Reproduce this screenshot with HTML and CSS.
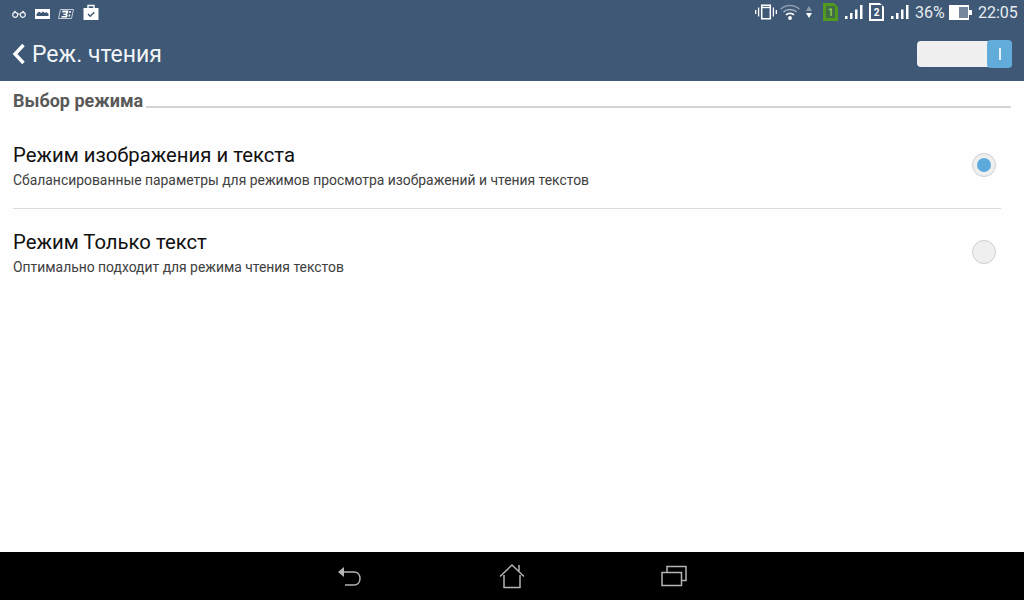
FILE: index.html
```html
<!DOCTYPE html>
<html lang="ru">

<head>
    <meta charset="UTF-8">
    <title>Реж. чтения</title>
    <link rel="stylesheet" href="styles.css">
</head>

<body>
    <div class="screen">
        <header class="topbar">
            <div class="statusbar">
                <div class="status-left">
                    <!-- glasses -->
                    <svg class="icon glasses" width="14" height="8" viewBox="0 0 14 8" fill="none" stroke="#f2f4f6" stroke-width="1.200"><circle cx="3.200" cy="4.800" r="2.500"/><circle cx="10.800" cy="4.800" r="2.500"/><path d="M5.500 4h3M2 2.500L3.500.8M12 2.500L10.500.8"/></svg>
                    <!-- gallery -->
                    <svg class="icon gallery" width="15" height="10" viewBox="0 0 15 10"><path fill="#fff" d="M0 0h15v10H0z"/><path fill="#3e5875" d="M1.500 7V5l2.500-2.500 2 1.500 2-1.500 2 1.500 1.500-1 2 2v2z"/></svg>
                    <!-- calendar -->
                    <svg class="icon calendar" width="16" height="10" viewBox="0 0 16 10"><path fill="none" stroke="#c4ccd6" d="M2.500.5h13l-2 9H.5z"/><path fill="#fff" d="M4.500 1.500h6L10 4 9 5l.7 1-.6 2.500H3.300l.4-1.500h3.800l.3-1H5.200l.3-1.200h2.400l.2-1.300H4.200zM11.500 2H13l-.4 2h-1.500zM10.900 5.500h1.500L12 7.500h-1.500z"/></svg>
                    <!-- task bag -->
                    <svg class="icon bag" width="16" height="16" viewBox="0 0 16 16"><path fill="none" stroke="#fff" stroke-width="1.400" d="M5 4.500V1.500h6v3"/><path fill="#fff" d="M.5 4h15v12H.5z"/><path fill="none" stroke="#3e5875" stroke-width="1.500" d="M5 10l2.200 2.200 4-4"/></svg>
                </div>
                <div class="status-right">
                    <!-- vibrate -->
                    <svg class="icon vibrate" width="22" height="16" viewBox="0 0 22 16" fill="none" stroke="#fff"><path stroke-width="1.500" d="M6.700 1.200h8.600v13.600H6.700z"/><path stroke-width="1.400" d="M7 3.500h8"/><path stroke-width="1.300" d="M3.600 3.500v9M18.400 3.500v9M.7 6v4M21.300 6v4"/></svg>
                    <!-- wifi -->
                    <svg class="icon wifi" width="20" height="17" viewBox="0 0 20 17" fill="none"><path stroke="#8b9bad" stroke-width="1.500" d="M.6 6.200c5-5 13.800-5 18.800 0"/><path stroke="#a9b5c2" stroke-width="1.500" d="M3.400 9c3.500-3.400 9.700-3.400 13.200 0"/><path stroke="#fff" stroke-width="1.800" d="M6 11.800c2.200-2 5.800-2 8 0"/><circle cx="10" cy="15" r="1.900" fill="#fff"/></svg>
                    <!-- up/down arrows -->
                    <svg class="icon updown" width="6" height="12" viewBox="0 0 6 12"><path fill="#8b9bad" d="M3 0l3 5H0z"/><path fill="#fff" d="M3 12L0 7h6z"/></svg>
                    <!-- sim 1 -->
                    <span class="sim sim-one">1</span>
                    <svg class="icon bars" width="18" height="14" viewBox="0 0 18 14"><path fill="#fff" d="M0 11h2.500v3H0zM5 8h2.500v6H5zM10 4.500h2.500V14H10zM15 0h2.500v14H15z"/></svg>
                    <!-- sim 2 -->
                    <span class="sim sim-two">2</span>
                    <svg class="icon bars" width="18" height="14" viewBox="0 0 18 14"><path fill="#fff" d="M0 11h2.500v3H0zM5 8h2.500v6H5zM10 4.500h2.500V14H10zM15 0h2.500v14H15z"/></svg>
                    <span class="status-text percent">36%</span>
                    <!-- battery -->
                    <svg class="icon battery" width="23" height="15" viewBox="0 0 23 15"><path fill="#fff" d="M0 0h20v15H0zM20 5h3v5h-3z"/><path fill="#75879d" d="M10 2h9v11h-9z"/></svg>
                    <span class="status-text clock">22:05</span>
                </div>
            </div>
            <div class="actionbar">
                <div class="title-wrap">
                    <svg class="back" width="14" height="22" viewBox="0 0 14 22" fill="none" stroke="#fff" stroke-width="3.400"><path d="M11.500 2L3 11l8.500 9"/></svg>
                    <span class="title">Реж. чтения</span>
                </div>
                <div class="toggle"><span class="toggle-knob"><i></i></span></div>
            </div>
        </header>

        <main class="content">
            <div class="section-head">
                <span class="section-title">Выбор режима</span>
                <span class="section-line"></span>
            </div>
            <div class="row first">
                <div class="row-text">
                    <div class="row-title">Режим изображения и текста</div>
                    <div class="row-sub">Сбалансированные параметры для режимов просмотра изображений и чтения текстов</div>
                </div>
                <span class="radio checked"></span>
            </div>
            <div class="row">
                <div class="row-text">
                    <div class="row-title">Режим Только текст</div>
                    <div class="row-sub">Оптимально подходит для режима чтения текстов</div>
                </div>
                <span class="radio"></span>
            </div>
        </main>

        <nav class="navbar">
            <svg width="26" height="24" viewBox="0 0 26 24" fill="none" stroke="#b4b4b4" stroke-width="1.500"><path d="M5 8h12c8 0 8 13 0 13H8"/><path fill="#b4b4b4" stroke="none" d="M1 8l6-5v10z"/></svg>
            <svg width="26" height="26" viewBox="0 0 26 26" fill="none" stroke="#b4b4b4" stroke-width="1.500"><path d="M1 13.500L13 2l12 11.500"/><path d="M5 12v12.500h16V12M20 2v6"/></svg>
            <svg width="26" height="22" viewBox="0 0 26 22" fill="none" stroke="#b4b4b4" stroke-width="1.500"><path d="M1 7.500h19.500v13H1z"/><path d="M6 7V1.500h19v14h-4"/></svg>
        </nav>
    </div>
</body>

</html>
```

FILE: styles.css
```css
* {
    box-sizing: border-box;
}

body {
    margin: 0;
    font-family: Roboto, "Noto Sans", sans-serif;
    background-color: #fefefe;
}

.screen {
    width: 1024px;
    height: 600px;
    display: flex;
    flex-direction: column;
    overflow: hidden;
}

.topbar {
    height: 81px;
    background-color: #3e5875;
    color: #fff;
}

.statusbar {
    height: 27px;
    display: flex;
    justify-content: space-between;
    align-items: center;
    padding: 0 6px 3px 12px;
}

.status-left,
.status-right {
    display: flex;
    align-items: center;
}

.icon {
    display: block;
    flex: none;
}

.gallery {
    margin-left: 9px;
    margin-top: 3px;
}

.glasses {
    margin-top: 3px;
}

.calendar {
    margin-left: 8px;
    margin-top: 3px;
}

.bag {
    margin-left: 9px;
    margin-top: -1px;
}

.status-text {
    font-size: 16px;
    color: #e8ecf0;
}

.percent {
    margin-left: 6px;
    width: 31px;
}

.battery {
    margin-left: 3px;
    margin-top: 1px;
}

.clock {
    margin-left: 6px;
    width: 40px;
}

.wifi {
    margin-left: 3px;
    margin-top: -1px;
}

.updown {
    margin-left: 6px;
}

.bars {
    margin-left: 7px;
}

.sim {
    width: 15px;
    height: 18px;
    font-size: 10px;
    font-weight: 700;
    display: flex;
    align-items: center;
    justify-content: center;
    clip-path: polygon(0 0, 72% 0, 100% 22%, 100% 100%, 0 100%);
}

.sim-one {
    margin-left: 11px;
    border: 3px solid #4f9a1f;
    background-color: #3f6b45;
    color: #8ecb54;
}

.sim-two {
    margin-left: 6px;
    border: 2px solid #fff;
    background-color: #3e5875;
    color: #fff;
}

.actionbar {
    height: 54px;
    display: flex;
    justify-content: space-between;
    align-items: center;
    padding: 0 12px;
}

.title-wrap {
    display: flex;
    align-items: center;
    gap: 6px;
}

.title {
    font-size: 23px;
    color: #f2f4f6;
}

.toggle {
    width: 95px;
    height: 26px;
    margin-top: -1px;
    background-color: #f0f0f0;
    border-radius: 4px;
    display: flex;
    justify-content: flex-end;
}

.toggle-knob {
    width: 25px;
    height: 28px;
    margin-top: -1px;
    background-color: #62acdb;
    border-radius: 4px;
    display: flex;
    align-items: center;
    justify-content: center;
}

.toggle-knob i {
    width: 2px;
    height: 12px;
    background-color: #e6f2fa;
}

.content {
    flex: 1;
    padding: 0 13px;
}

.section-head {
    display: flex;
    align-items: flex-end;
    gap: 3px;
    height: 31px;
}

.section-title {
    font-size: 18px;
    font-weight: 700;
    color: #595959;
    line-height: 20px;
    margin-bottom: 1px;
}

.section-line {
    flex: 1;
    height: 2px;
    margin-bottom: 4px;
    background-color: #d4d4d4;
}

.row {
    display: flex;
    justify-content: space-between;
    align-items: center;
    width: 988px;
    height: 85px;
    padding-right: 5px;
}

.row.first {
    height: 97px;
    padding-top: 10px;
    border-bottom: 1px solid #dcdcdc;
}

.row-text {
    padding-top: 2px;
}

.row-title {
    font-size: 20.300px;
    color: #101010;
    line-height: 24px;
}

.row-sub {
    font-size: 13.900px;
    color: #404040;
    line-height: 18px;
    margin-top: 4px;
}

.radio {
    width: 24px;
    height: 24px;
    border-radius: 50%;
    border: 1px solid #cfcfcf;
    background-color: #efefef;
    display: flex;
    align-items: center;
    justify-content: center;
}

.radio.checked::after {
    content: '';
    width: 14px;
    height: 14px;
    border-radius: 50%;
    background-color: #5caadb;
}

.navbar {
    height: 48px;
    background-color: #000;
    display: flex;
    justify-content: center;
    align-items: center;
    gap: 136px;
}
```
